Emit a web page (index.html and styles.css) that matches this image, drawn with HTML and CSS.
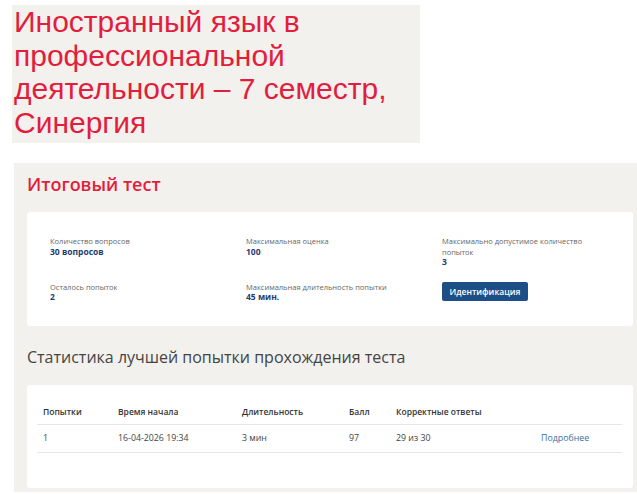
FILE: index.html
```html
<!DOCTYPE html>
<html lang="ru">
<head>
    <meta charset="UTF-8">
    <meta name="viewport" content="width=device-width, initial-scale=1.0">
    <title>Итоговый тест</title>
    <link rel="stylesheet" href="styles.css">
</head>
<body>
    <div class="course-title">
        <h1>Иностранный язык в профессиональной деятельности – 7 семестр, Синергия</h1>
    </div>

    <div class="test-block">
        <h2 class="test-title">Итоговый тест</h2>

        <div class="card info-card">
            <div class="info-grid">
                <div class="info-item">
                    <div class="info-label">Количество вопросов</div>
                    <div class="info-value">30 вопросов</div>
                </div>
                <div class="info-item">
                    <div class="info-label">Максимальная оценка</div>
                    <div class="info-value">100</div>
                </div>
                <div class="info-item">
                    <div class="info-label">Максимально допустимое количество попыток</div>
                    <div class="info-value">3</div>
                </div>
                <div class="info-item">
                    <div class="info-label">Осталось попыток</div>
                    <div class="info-value">2</div>
                </div>
                <div class="info-item">
                    <div class="info-label">Максимальная длительность попытки</div>
                    <div class="info-value">45 мин.</div>
                </div>
                <div class="info-item">
                    <button class="ident-button">Идентификация</button>
                </div>
            </div>
        </div>

        <h3 class="stats-title">Статистика лучшей попытки прохождения теста</h3>

        <div class="card stats-card">
            <table class="stats-table">
                <thead>
                    <tr>
                        <th class="col-try">Попытки</th>
                        <th class="col-start">Время начала</th>
                        <th class="col-dur">Длительность</th>
                        <th class="col-score">Балл</th>
                        <th class="col-correct">Корректные ответы</th>
                        <th class="col-more"></th>
                    </tr>
                </thead>
                <tbody>
                    <tr>
                        <td>1</td>
                        <td>16-04-2026 19:34</td>
                        <td>3 мин</td>
                        <td>97</td>
                        <td>29 из 30</td>
                        <td><a href="#" class="more-link">Подробнее</a></td>
                    </tr>
                </tbody>
            </table>
        </div>
    </div>
</body>
</html>
```

FILE: styles.css
```css
body {
    margin: 0;
    padding: 0;
    background-color: #fff;
    font-family: "Open Sans", Arial, sans-serif;
}
.course-title {
    margin: 5px 0 0 12px;
    width: 406px;
    height: 138px;
    padding-left: 2px;
    background-color: #f2f1ee;
}
.course-title h1 {
    margin: 0;
    font-family: "Liberation Sans", Arial, sans-serif;
    font-weight: normal;
    font-size: 30px;
    line-height: 33.5px;
    color: #e31d3c;
}
.test-block {
    margin: 20px 0 0 14px;
    padding: 10px 4px 4px 13px;
    background-color: #f2f1ee;
}
.test-title {
    margin: 0 0 17px 0;
    font-size: 18px;
    line-height: 22px;
    font-weight: 600;
    color: #e31d3c;
}
.card {
    background-color: #fff;
    border-radius: 3px;
}
.info-card {
    padding: 24px 10px 23px 23px;
}
.info-grid {
    display: grid;
    grid-template-columns: 196px 196px 1fr;
    row-gap: 14px;
    align-items: start;
}
.info-label {
    font-size: 7.5px;
    line-height: 10.5px;
    color: #666;
    padding-right: 30px;
}
.info-value {
    font-size: 8.5px;
    line-height: 10.5px;
    font-weight: 700;
    color: #1f3c6e;
}
.ident-button {
    display: block;
    width: 86px;
    height: 19px;
    padding: 0;
    border: none;
    border-radius: 2px;
    background-color: #1d4e85;
    color: #fff;
    font-family: "Open Sans", Arial, sans-serif;
    font-size: 8.5px;
    font-weight: 600;
    cursor: pointer;
}
.stats-title {
    margin: 19px 0 16px 0;
    font-size: 16px;
    line-height: 24px;
    font-weight: 400;
    color: #444;
}
.stats-card {
    padding: 14px 11px 35px 10px;
}
.stats-table {
    width: 585px;
    border-collapse: collapse;
    table-layout: fixed;
    font-size: 8.5px;
    color: #444;
}
.stats-table th {
    text-align: left;
    font-weight: 600;
    color: #333;
    height: 25px;
    padding: 0 0 0 6px;
    border-bottom: 1px solid #e6e6e6;
}
.stats-table td {
    height: 27px;
    padding: 0 0 0 6px;
    font-size: 8.8px;
    border-bottom: 1px solid #e6e6e6;
}
.col-try { width: 69px; }
.col-start { width: 118px; }
.col-dur { width: 101px; }
.col-score { width: 41px; }
.col-correct { width: 139px; }
.more-link {
    color: #3a6ea5;
    text-decoration: none;
}
```
